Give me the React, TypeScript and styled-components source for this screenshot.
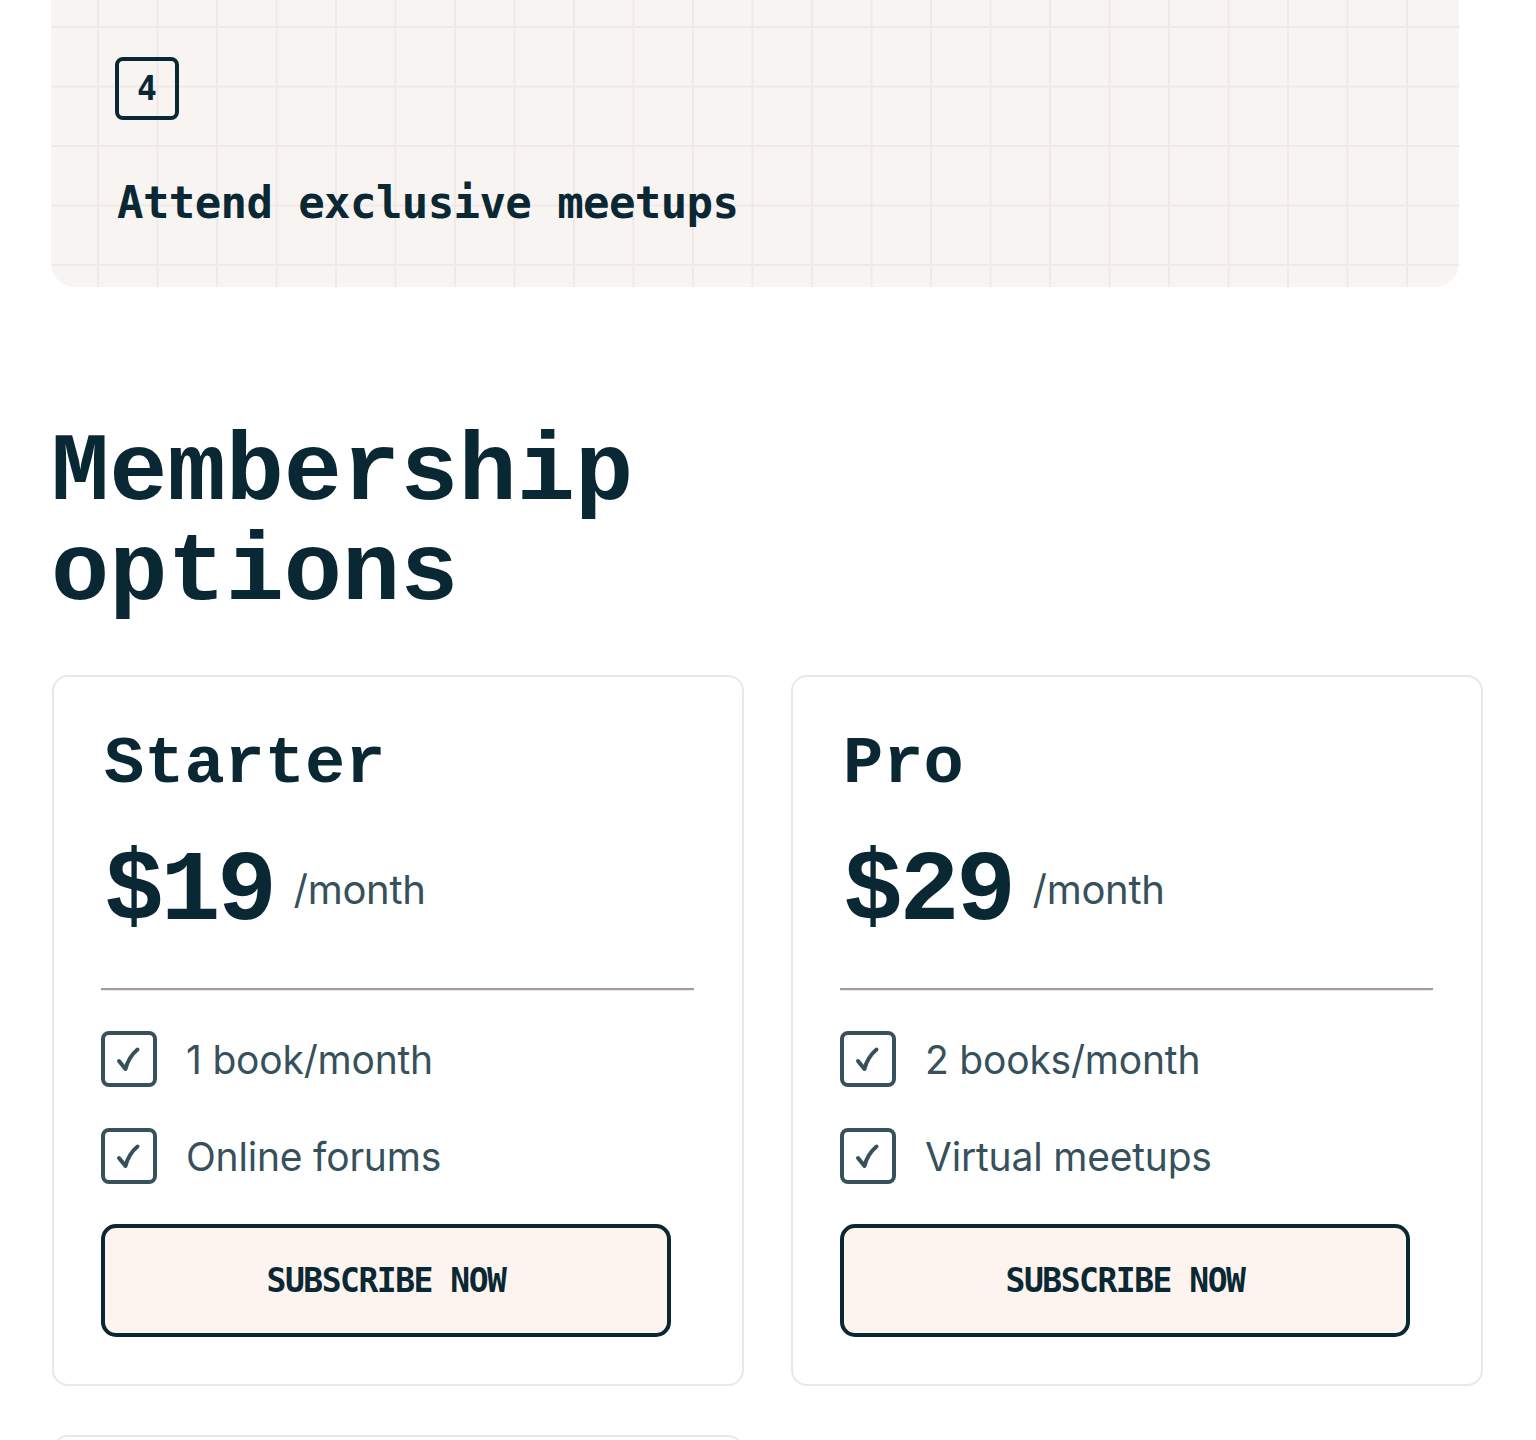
import React from 'react'
import styled, { createGlobalStyle } from 'styled-components'

const DARK = '#0a2833'
const MUTED = '#36515b'

const GlobalStyle = createGlobalStyle`
  html, body {
    margin: 0;
    padding: 0;
    background: #ffffff;
  }
  body {
    font-family: Inter, 'Liberation Sans', sans-serif;
    color: ${DARK};
  }
`

type Plan = {
  name: string
  price: string
  features: string[]
}

const plans: Plan[] = [
  { name: 'Starter', price: '$19', features: ['1 book/month', 'Online forums'] },
  { name: 'Pro', price: '$29', features: ['2 books/month', 'Virtual meetups'] },
]

const CheckIcon = () => (
  <svg width="34" height="34" viewBox="0 0 34 34" fill="none">
    <path
      d="M7 19 L13.5 27 C15.5 19 19.5 12.5 25.5 7.5"
      stroke={MUTED}
      strokeWidth="4"
      strokeLinecap="round"
      strokeLinejoin="round"
    />
  </svg>
)

export default function App() {
  return (
    <Page>
      <GlobalStyle />
      <StepCard>
        <StepNumber>4</StepNumber>
        <StepText>Attend exclusive meetups</StepText>
      </StepCard>

      <Heading>Membership options</Heading>

      <PlanGrid>
        {plans.map(plan => (
          <PlanCard key={plan.name}>
            <PlanName>{plan.name}</PlanName>
            <PriceRow>
              <Price>{plan.price}</Price>
              <Period>/month</Period>
            </PriceRow>
            <Divider />
            <FeatureList>
              {plan.features.map(f => (
                <Feature key={f}>
                  <CheckBox>
                    <CheckIcon />
                  </CheckBox>
                  <FeatureText>{f}</FeatureText>
                </Feature>
              ))}
            </FeatureList>
            <SubscribeButton>SUBSCRIBE NOW</SubscribeButton>
          </PlanCard>
        ))}
        <PlanCard />
      </PlanGrid>
    </Page>
  )
}

const Page = styled.div`
  padding: 0 0 0 51px;
  width: 1536px;
  box-sizing: border-box;
  overflow: hidden;
`

const StepCard = styled.section`
  width: 1408px;
  height: 287px;
  box-sizing: border-box;
  padding: 57px 0 0 64px;
  border-radius: 0 0 24px 24px;
  background-color: #f8f4f2;
  background-image:
    linear-gradient(to right, #efeae8 2px, transparent 2px),
    linear-gradient(to bottom, #efeae8 2px, transparent 2px);
  background-size: 59.5px 59.5px;
  background-position: 46px 26px;
`

const StepNumber = styled.div`
  width: 64px;
  height: 63px;
  box-sizing: border-box;
  border: 4px solid ${DARK};
  border-radius: 8px;
  display: flex;
  align-items: center;
  justify-content: center;
  font-family: 'DejaVu Sans Mono', 'Liberation Mono', monospace;
  font-weight: 700;
  font-size: 33px;
  color: ${DARK};
`

const StepText = styled.h3`
  margin: 57px 0 0 2px;
  font-family: 'DejaVu Sans Mono', 'Liberation Mono', monospace;
  font-weight: 700;
  font-size: 44px;
  letter-spacing: -0.6px;
  line-height: 1.2;
  color: ${DARK};
`

const Heading = styled.h2`
  margin: 136px 0 0 0;
  max-width: 720px;
  font-family: 'Liberation Mono', 'DejaVu Sans Mono', monospace;
  font-weight: 700;
  font-size: 97px;
  line-height: 100px;
  color: ${DARK};
`

const PlanGrid = styled.div`
  display: grid;
  grid-template-columns: 692px 692px;
  column-gap: 47px;
  row-gap: 49px;
  margin-top: 52px;
  padding-left: 1px;
`

const PlanCard = styled.article`
  min-height: 711px;
  box-sizing: border-box;
  border: 2px solid #ebe7e5;
  border-radius: 16px;
  padding: 52px 49px 44px 47px;
  display: flex;
  flex-direction: column;
  background: #fff;
`

const PlanName = styled.h3`
  margin: 0 0 0 3px;
  font-family: 'Liberation Mono', 'DejaVu Sans Mono', monospace;
  font-weight: 700;
  font-size: 67px;
  line-height: 70px;
  color: ${DARK};
`

const PriceRow = styled.div`
  display: flex;
  align-items: center;
  gap: 20px;
  margin: 44px 0 0 3px;
`

const Price = styled.span`
  font-family: 'Liberation Mono', 'DejaVu Sans Mono', monospace;
  font-weight: 700;
  font-size: 100px;
  letter-spacing: -3.5px;
  line-height: 100px;
  color: ${DARK};
`

const Period = styled.span`
  font-family: Inter, 'Liberation Sans', sans-serif;
  font-size: 40px;
  color: ${MUTED};
  letter-spacing: -0.3px;
  margin-top: -8px;
`

const Divider = styled.hr`
  margin: 45px 0 0 0;
  width: 593px;
  height: 0;
  border: none;
  border-top: 2px solid #a49c98;
  border-bottom: 1px solid #eeeae8;
`

const FeatureList = styled.ul`
  list-style: none;
  margin: 40px 0 0 0;
  padding: 0;
  display: flex;
  flex-direction: column;
  gap: 41px;
`

const Feature = styled.li`
  display: flex;
  align-items: center;
  gap: 29px;
`

const CheckBox = styled.span`
  width: 56px;
  height: 56px;
  box-sizing: border-box;
  border: 4px solid ${MUTED};
  border-radius: 8px;
  display: flex;
  align-items: center;
  justify-content: center;
`

const FeatureText = styled.span`
  font-family: Inter, 'Liberation Sans', sans-serif;
  font-size: 39px;
  color: ${MUTED};
  letter-spacing: -0.2px;
`

const SubscribeButton = styled.button`
  margin-top: 40px;
  width: 570px;
  height: 113px;
  box-sizing: border-box;
  border: 4px solid ${DARK};
  border-radius: 15px;
  background: #fdf4ef;
  font-family: 'DejaVu Sans Mono', 'Liberation Mono', monospace;
  font-weight: 700;
  font-size: 33px;
  letter-spacing: -1.5px;
  color: ${DARK};
  cursor: pointer;
`
